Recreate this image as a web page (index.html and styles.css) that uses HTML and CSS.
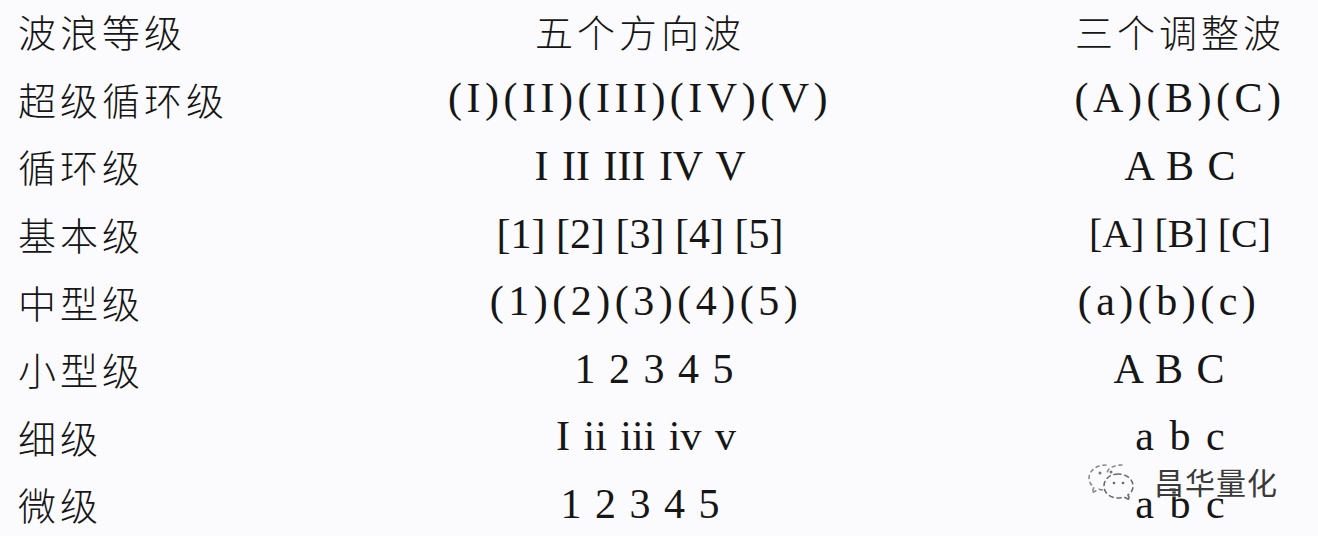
FILE: index.html
```html
<!DOCTYPE html>
<html lang="zh">
<head>
<meta charset="utf-8">
<title>波浪等级</title>
<link rel="stylesheet" href="styles.css">
</head>
<body>
<div class="sheet">
  <div class="table">
    <div class="cell label">波浪等级</div>
    <div class="cell mid cjk">五个方向波</div>
    <div class="cell right cjk">三个调整波</div>

    <div class="cell label">超级循环级</div>
    <div class="cell mid lat paren">(I)(II)(III)(IV)(V)</div>
    <div class="cell right lat paren">(A)(B)(C)</div>

    <div class="cell label">循环级</div>
    <div class="cell mid lat words">I II III IV V</div>
    <div class="cell right lat words">A B C</div>

    <div class="cell label">基本级</div>
    <div class="cell mid lat">[1] [2] [3] [4] [5]</div>
    <div class="cell right lat small">[A] [B] [C]</div>

    <div class="cell label">中型级</div>
    <div class="cell mid lat paren nudge-r">(1)(2)(3)(4)(5)</div>
    <div class="cell right lat paren nudge-l">(a)(b)(c)</div>

    <div class="cell label">小型级</div>
    <div class="cell mid lat words nudge-rr">1 2 3 4 5</div>
    <div class="cell right lat words nudge-l">A B C</div>

    <div class="cell label">细级</div>
    <div class="cell mid lat words nudge-r">I ii iii iv v</div>
    <div class="cell right lat wide">a b c</div>

    <div class="cell label">微级</div>
    <div class="cell mid lat words">1 2 3 4 5</div>
    <div class="cell right lat wide">a b c</div>
  </div>

  <div class="watermark">
    <svg class="wm-icon" width="50" height="40" viewBox="0 0 50 40" aria-hidden="true">
      <path d="M20 4 C10 4 3 10 3 17 C3 21 5 24 8 26 L6 32 L13 28 C15 29 17 29 19 29" fill="none" stroke="#8a8a8a" stroke-width="1.6" stroke-dasharray="3 4" stroke-linecap="round"/>
      <path d="M36 4 C30 4 22 6 21 12" fill="none" stroke="#8a8a8a" stroke-width="1.6" stroke-dasharray="3 4" stroke-linecap="round"/>
      <path d="M32 13 C24 13 18 18 18 25 C18 32 24 37 32 37 C34 37 36 36.5 38 36 L44 39 L42 34 C45 32 47 29 47 25 C47 18 40 13 32 13 Z" fill="none" stroke="#6a6a6a" stroke-width="1.6" stroke-dasharray="4 4" stroke-linecap="round"/>
      <circle cx="14" cy="12" r="1.5" fill="#777"/>
      <circle cx="25" cy="11" r="1.5" fill="#777"/>
      <circle cx="28" cy="22" r="1.3" fill="#666"/>
      <circle cx="37" cy="22" r="1.3" fill="#666"/>
    </svg>
    <span class="wm-text">昌华量化</span>
  </div>
</div>
</body>
</html>
```

FILE: styles.css
```css
html, body {
  margin: 0;
  padding: 0;
  background: #fbfbfd;
}

.sheet {
  position: relative;
  width: 1318px;
  height: 536px;
  overflow: hidden;
  color: #161616;
}

.table {
  display: grid;
  grid-template-columns: 402px 440px 458px;
  grid-auto-rows: 67.6px;
  padding-left: 18px;
  margin-top: -3px;
}

.cell {
  display: flex;
  align-items: center;
  white-space: nowrap;
}

.label,
.cjk {
  font-family: "Noto Sans CJK SC", "Noto Sans", sans-serif;
  font-weight: 300;
  font-size: 38px;
  letter-spacing: 4px;
}

.mid {
  justify-content: center;
}

.right {
  justify-content: center;
  padding-left: 182px;
}

.lat {
  font-family: "Liberation Serif", "Times New Roman", serif;
  font-size: 42px;
}

.paren {
  letter-spacing: 4.5px;
}

.words {
  word-spacing: 3px;
}

.wide {
  word-spacing: 5px;
}

.small {
  font-size: 40px;
}

.nudge-r {
  padding-left: 12px;
}

.nudge-rr {
  padding-left: 28px;
}

.right.nudge-l {
  padding-left: 160px;
}

.watermark {
  position: absolute;
  left: 1086px;
  top: 461px;
  display: flex;
  align-items: center;
  gap: 18px;
}

.wm-icon {
  display: block;
}

.wm-text {
  font-family: "Noto Sans CJK SC", sans-serif;
  font-size: 30px;
  line-height: 1;
  color: #3a3a3a;
  letter-spacing: 1px;
  text-shadow: 0 0 2px #fff, 0 0 2px #fff;
}
```
